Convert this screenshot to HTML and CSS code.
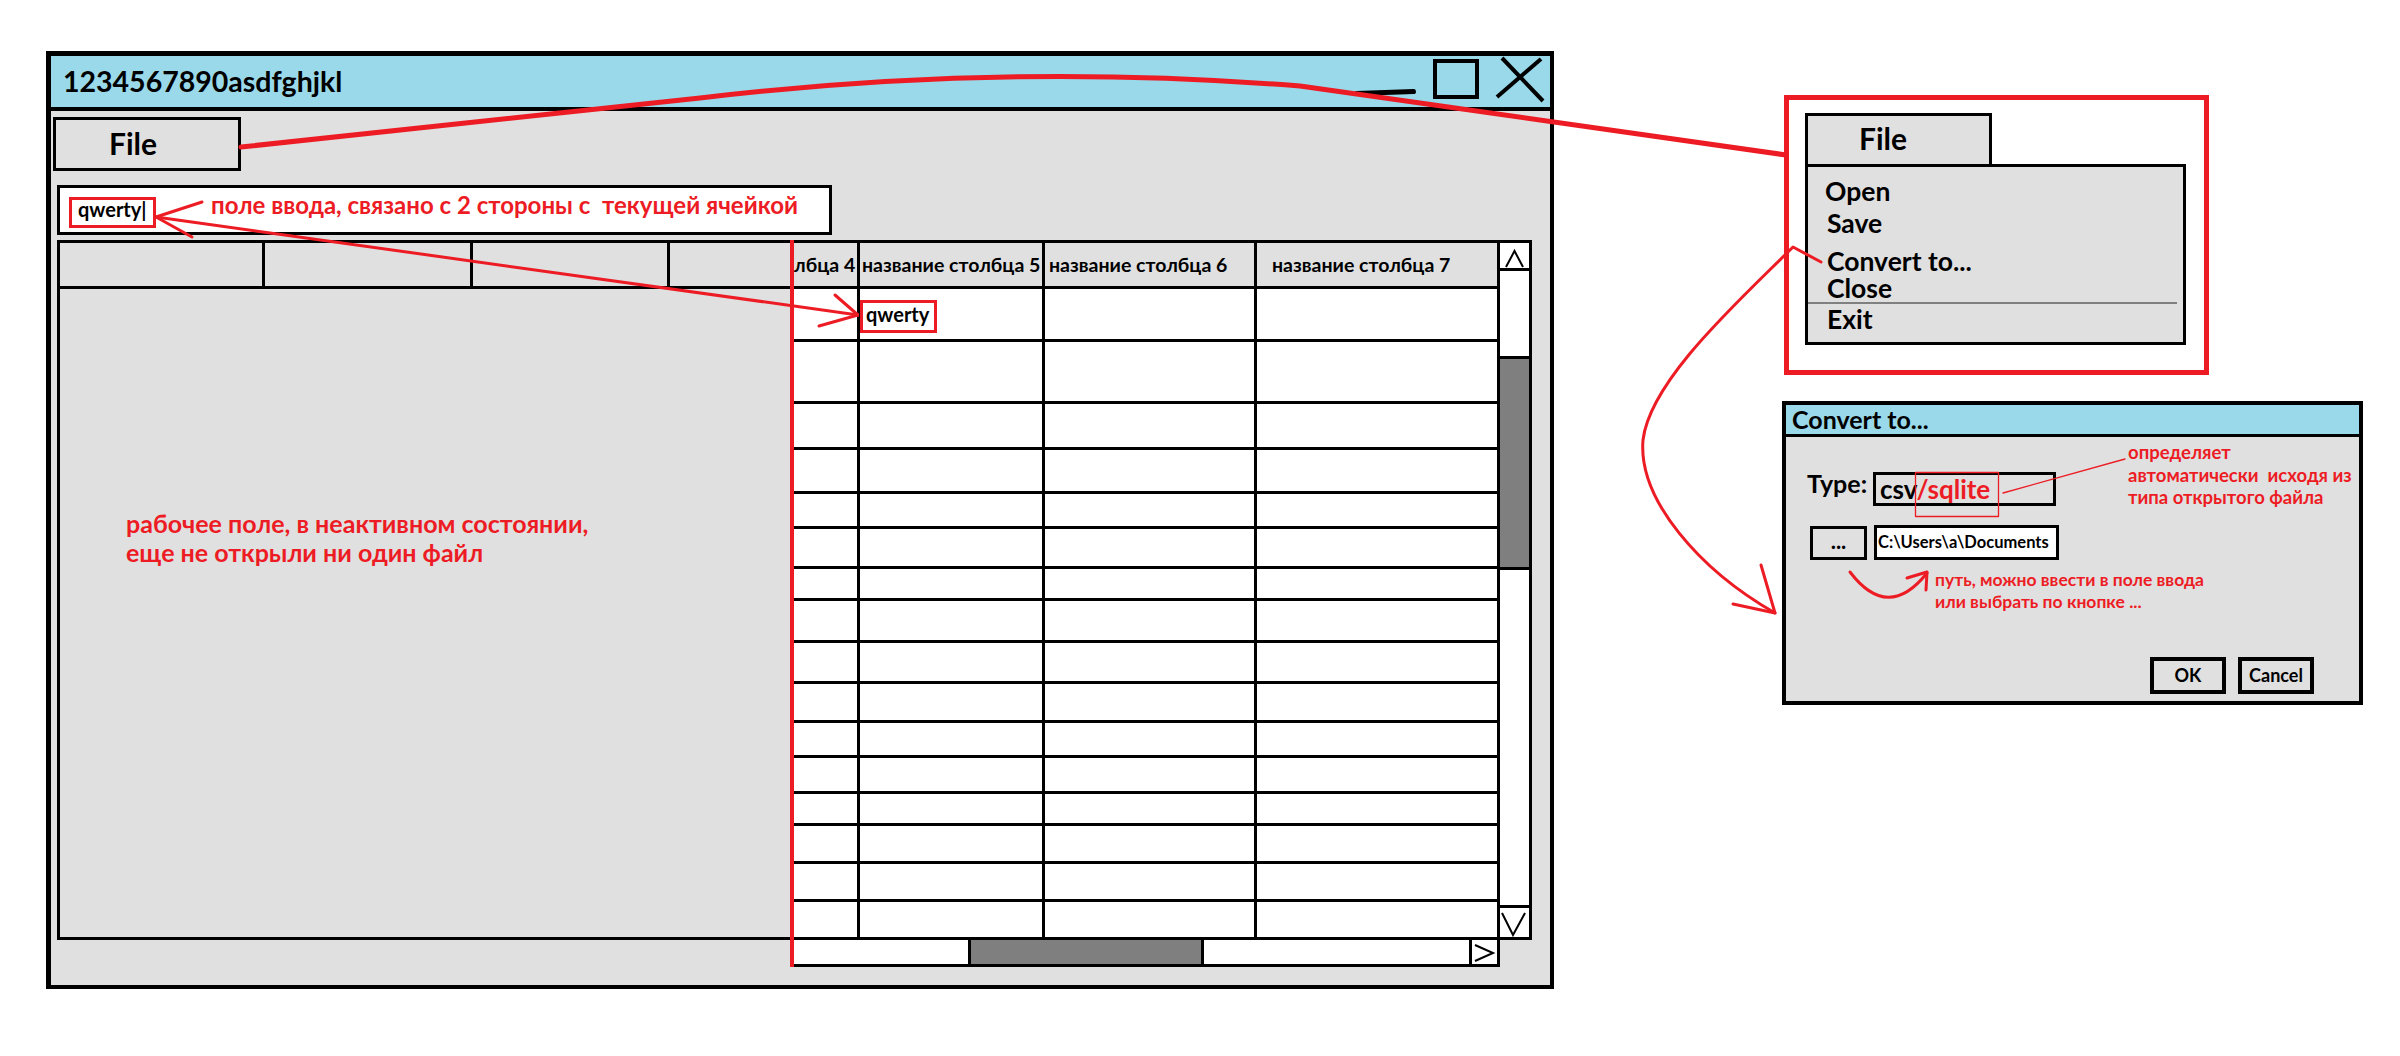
FILE: index.html
```html
<!DOCTYPE html>
<html lang="ru">
<head>
<meta charset="utf-8">
<title>Mockup</title>
<link rel="stylesheet" href="styles.css">
</head>
<body>
<div class="board">
  <div class="window">
    <div class="titlebar">
      <span class="title">1234567890asdfghjkl</span>
      <svg class="winctl" width="200" height="51" viewBox="0 0 200 51">
        <line x1="6.5" y1="37.5" x2="63.5" y2="35.5" stroke="#000" stroke-width="5" stroke-linecap="round"/>
        <rect x="85" y="5" width="42" height="36" fill="none" stroke="#000" stroke-width="4"/>
        <line x1="152" y1="2" x2="193" y2="45" stroke="#000" stroke-width="4"/>
        <line x1="191" y1="3" x2="147" y2="41" stroke="#000" stroke-width="4"/>
      </svg>
    </div>
    <div class="winbody">
      <div class="menubtn">File</div>
      <div class="inputbar">
        <div class="cellref">qwerty|</div>
        <span class="note note-input">поле ввода, связано с 2 стороны с&nbsp; текущей ячейкой</span>
      </div>
      <div class="tablearea">
        <div class="leftpane">
          <div class="lhead">
            <div class="lh lh1"></div>
            <div class="lh lh2"></div>
            <div class="lh lh3"></div>
            <div class="lh lh4"></div>
          </div>
          <div class="lbody">
            <p class="note note-work">рабочее поле, в неактивном состоянии,<br>еще не открыли ни один файл</p>
          </div>
        </div>
        <div class="redline"></div>
        <div class="grid">
          <div class="hc h4">лбца 4</div><div class="hc h5">название столбца 5</div><div class="hc h6">название столбца 6</div><div class="hc h7">название столбца 7</div>
          <div class="bc"></div><div class="bc sel"><div class="cellval">qwerty</div></div><div class="bc"></div><div class="bc"></div>
          <div class="bc"></div><div class="bc"></div><div class="bc"></div><div class="bc"></div>
          <div class="bc"></div><div class="bc"></div><div class="bc"></div><div class="bc"></div>
          <div class="bc"></div><div class="bc"></div><div class="bc"></div><div class="bc"></div>
          <div class="bc"></div><div class="bc"></div><div class="bc"></div><div class="bc"></div>
          <div class="bc"></div><div class="bc"></div><div class="bc"></div><div class="bc"></div>
          <div class="bc"></div><div class="bc"></div><div class="bc"></div><div class="bc"></div>
          <div class="bc"></div><div class="bc"></div><div class="bc"></div><div class="bc"></div>
          <div class="bc"></div><div class="bc"></div><div class="bc"></div><div class="bc"></div>
          <div class="bc"></div><div class="bc"></div><div class="bc"></div><div class="bc"></div>
          <div class="bc"></div><div class="bc"></div><div class="bc"></div><div class="bc"></div>
          <div class="bc"></div><div class="bc"></div><div class="bc"></div><div class="bc"></div>
          <div class="bc"></div><div class="bc"></div><div class="bc"></div><div class="bc"></div>
          <div class="bc"></div><div class="bc"></div><div class="bc"></div><div class="bc"></div>
          <div class="bc"></div><div class="bc"></div><div class="bc"></div><div class="bc"></div>
          <div class="bc"></div><div class="bc"></div><div class="bc"></div><div class="bc"></div>
        </div>
        <div class="vscroll">
          <div class="sb-up">
            <svg width="29" height="25" viewBox="0 0 29 25"><polyline points="6,24 14.5,8 23,24" fill="none" stroke="#000" stroke-width="2"/></svg>
          </div>
          <div class="sb-gap"></div>
          <div class="sb-thumb"></div>
          <div class="sb-fill"></div>
          <div class="sb-down">
            <svg width="29" height="29" viewBox="0 0 29 29"><polyline points="2,5 13,27 25,5" fill="none" stroke="#000" stroke-width="2"/></svg>
          </div>
        </div>
        <div class="hscroll">
          <div class="hs-left"></div>
          <div class="hs-thumb"></div>
          <div class="hs-fill"></div>
          <div class="hs-right">
            <svg width="25" height="24" viewBox="0 0 25 24"><polyline points="3,5 21,13 3,21" fill="none" stroke="#000" stroke-width="2"/></svg>
          </div>
        </div>
      </div>
    </div>
  </div>

  <div class="rightcol">
    <div class="menubox">
      <div class="mtab">File</div>
      <div class="mpanel">
        <div class="mi mi-open">Open</div>
        <div class="mi mi-save">Save</div>
        <div class="mi mi-conv">Convert to...</div>
        <div class="mi mi-close">Close</div>
        <div class="msep"></div>
        <div class="mi mi-exit">Exit</div>
      </div>
    </div>

    <div class="dialog">
      <div class="dtitle">Convert to...</div>
      <div class="dbody">
        <div class="drow1">
          <div class="dlabel">Type:</div>
          <div class="typebox">csv<span class="red">/sqlite</span></div>
          <div class="note dnote1">определяет<br>автоматически&nbsp; исходя из<br>типа открытого файла</div>
        </div>
        <div class="drow2">
          <div class="dotsbtn">...</div>
          <div class="pathinput">C:\Users\a\Documents</div>
        </div>
        <div class="note dnote2">путь, можно ввести в поле ввода<br>или выбрать по кнопке ...</div>
        <div class="dbtns">
          <div class="dbtn">OK</div>
          <div class="dbtn">Cancel</div>
        </div>
      </div>
    </div>
  </div>
</div>

<svg class="overlay" width="2400" height="1056" viewBox="0 0 2400 1056">
  <g fill="none" stroke="#ed1c24" stroke-linecap="round" stroke-linejoin="round">
    <path d="M241,147 L700,98 Q1000,62 1300,86 L1786,155" stroke-width="5"/>
    <path d="M156,217 L858,315" stroke-width="3"/>
    <path d="M202,202 L156,217 L192,237" stroke-width="3"/>
    <path d="M835,295 L858,315 L819,326" stroke-width="3"/>
    <path d="M1821,262 L1793,247 C1740,300 1650,380 1643,440 C1638,500 1700,570 1775,613" stroke-width="3"/>
    <path d="M1761,565 L1775,613 L1733,604" stroke-width="3"/>
    <rect x="1915.5" y="472.5" width="83" height="44" stroke-width="1.3"/>
    <path d="M2003,493 L2125,459" stroke-width="1.3"/>
    <path d="M1850,572 Q1888,622 1927,573" stroke-width="3"/>
    <path d="M1907,578 L1927,572 L1926,590" stroke-width="3"/>
  </g>
</svg>
</body>
</html>
```

FILE: styles.css
```css
* { box-sizing: border-box; margin: 0; padding: 0; }
html, body { background: #fff; }
body {
  font-family: "Lato", "Liberation Sans", sans-serif;
  font-weight: 700;
  color: #000;
  width: 2400px;
  height: 1056px;
  overflow: hidden;
  position: relative;
}
.red { color: #ed1c24; }
.note { color: #ed1c24; white-space: nowrap; }

.board { display: flex; align-items: flex-start; padding: 51px 0 0 46px; }

/* main window */
.window {
  width: 1508px; height: 938px;
  border-style: solid; border-color: #000; border-width: 5px 4px 4px 5px;
  background: #e0e0e0;
  display: flex; flex-direction: column;
  flex: none;
}
.titlebar {
  height: 55px; flex: none;
  background: #99d9ea;
  border-bottom: 4px solid #000;
  display: flex;
}
.title { font-size: 28.5px; line-height: 51px; padding-left: 12px; }
.winctl { margin-left: auto; display: block; }

.winbody { flex: 1; display: flex; flex-direction: column; align-items: flex-start; padding-left: 2px; }
.menubtn {
  margin-top: 6px; width: 188px; height: 54px;
  border: 3px solid #000;
  font-size: 30px; line-height: 47px; padding-left: 53px;
}
.inputbar {
  margin: 14px 0 0 4px; width: 775px; height: 50px;
  border: 3px solid #000; background: #fff;
  display: flex; align-items: flex-start;
}
.cellref {
  margin: 9px 0 0 9px; width: 87px; height: 31px;
  border: 3px solid #ed1c24;
  padding-left: 6px; font-size: 20px; line-height: 18px;
}
.note-input { margin: 4px 0 0 55px; font-size: 24px; line-height: 26px; }

/* table */
.tablearea {
  margin: 5px 0 0 4px;
  display: grid;
  grid-template-columns: 733px 4px 703px 35px;
  grid-template-rows: 700px 27px;
}
.leftpane {
  grid-area: 1 / 1 / 2 / 2;
  border-left: 3px solid #000; border-top: 3px solid #000; border-bottom: 3px solid #000;
  display: flex; flex-direction: column;
}
.lhead { display: flex; height: 46px; border-bottom: 3px solid #000; flex: none; }
.lh { border-right: 3px solid #000; }
.lh1 { width: 205px; }
.lh2 { width: 208px; }
.lh3 { width: 197px; }
.lh4 { flex: 1; border-right: 0; }
.lbody { flex: 1; padding: 220px 0 0 66px; }
.note-work { font-size: 25px; line-height: 29px; }

.redline { grid-area: 1 / 2 / 3 / 3; background: #ed1c24; }

.grid {
  grid-area: 1 / 3 / 2 / 4;
  border-top: 3px solid #000; border-bottom: 3px solid #000;
  background: #000;
  display: grid;
  grid-template-columns: 63px 182px 209px 240px;
  grid-template-rows: 43px 50px 59px 43px 41px 32px 37px 29px 39px 38px 36px 32px 33px 29px 35px 35px 35px;
  gap: 3px;
}
.hc { background: #e0e0e0; font-size: 19.5px; line-height: 43px; white-space: nowrap; overflow: hidden; }
.h4 { text-align: right; padding-right: 4px; }
.h5 { padding-left: 2px; }
.h6 { padding-left: 4px; }
.h7 { padding-left: 15px; }
.bc { background: #fff; }
.sel { position: relative; z-index: 1; box-shadow: 0 0 0 1px #000; }
.cellval {
  margin-top: 11px; width: 77px; height: 33px;
  border: 3px solid #ed1c24;
  padding: 1px 0 0 3px; font-size: 20px; line-height: 20px;
}

.vscroll {
  grid-area: 1 / 4 / 2 / 5;
  border: 3px solid #000; background: #fff;
  display: flex; flex-direction: column;
}
.vscroll svg, .hscroll svg { display: block; }
.sb-up { height: 28px; border-bottom: 3px solid #000; flex: none; }
.sb-gap { height: 85px; flex: none; }
.sb-thumb { height: 214px; flex: none; background: #7f7f7f; border-top: 3px solid #000; border-bottom: 3px solid #000; }
.sb-fill { flex: 1; }
.sb-down { height: 32px; border-top: 3px solid #000; flex: none; }

.hscroll {
  grid-area: 2 / 3 / 3 / 4;
  width: 706px;
  background: #fff;
  border-right: 3px solid #000; border-bottom: 3px solid #000;
  display: flex;
}
.hs-left { width: 174px; }
.hs-thumb { width: 236px; background: #7f7f7f; border-left: 3px solid #000; border-right: 3px solid #000; }
.hs-fill { flex: 1; }
.hs-right { width: 28px; border-left: 3px solid #000; }

/* right column */
.rightcol { margin-left: 230px; display: flex; flex-direction: column; align-items: flex-start; }
.menubox {
  margin-top: 44px; width: 425px; height: 280px;
  border: 5px solid #ed1c24; background: #fff;
  padding: 13px 0 0 16px;
}
.mtab {
  width: 187px; height: 51px;
  border: 3px solid #000; border-bottom: 0;
  background: #e0e0e0;
  font-size: 30px; line-height: 44px; padding-left: 51px;
}
.mpanel {
  width: 381px; height: 181px;
  border: 3px solid #000; background: #e0e0e0;
  padding-top: 11px;
}
.mi { font-size: 26.5px; line-height: 26px; padding-left: 19px; }
.mi-open { height: 32px; padding-left: 17px; }
.mi-save { height: 38px; }
.mi-conv { height: 27px; }
.mi-close { height: 27px; }
.msep { height: 2px; background: #808080; margin: 0 6px 2px 0; }
.mi-exit { height: 26px; }

.dialog {
  margin: 26px 0 0 -2px; width: 581px; height: 304px;
  border: 4px solid #000; background: #e0e0e0;
  display: flex; flex-direction: column;
}
.dtitle {
  height: 32px; flex: none;
  background: #99d9ea; border-bottom: 3px solid #000;
  font-size: 25px; line-height: 29px; padding-left: 6px;
}
.dbody { flex: 1; display: flex; flex-direction: column; align-items: flex-start; }
.drow1 { display: flex; align-items: flex-start; margin-top: 4px; }
.dlabel { margin: 27px 0 0 21px; width: 66px; font-size: 25px; line-height: 30px; }
.typebox {
  margin-top: 31px; width: 183px; height: 34px;
  border: 3px solid #000;
  font-size: 26px; line-height: 28px; padding-left: 4px; white-space: nowrap;
}
.dnote1 { margin-left: 72px; font-size: 18.5px; line-height: 22.5px; }
.drow2 { display: flex; align-items: flex-start; margin-top: 16px; }
.dotsbtn {
  margin: 1px 0 0 24px; width: 57px; height: 34px;
  border: 3px solid #000;
  text-align: center; font-size: 22px; line-height: 24px;
}
.pathinput {
  margin-left: 7px; width: 185px; height: 35px;
  border: 3px solid #000; background: #fff;
  font-size: 16.5px; line-height: 29px; padding-left: 1px;
  white-space: nowrap; overflow: hidden;
}
.dnote2 { margin: 9px 0 0 149px; font-size: 17.5px; line-height: 22px; }
.dbtns { align-self: flex-end; display: flex; align-items: flex-end; gap: 12px; margin: 44px 45px 0 0; }
.dbtn {
  width: 76px; height: 37px;
  border: 4px solid #000;
  text-align: center; font-size: 18px; line-height: 29px;
}

.overlay { position: absolute; left: 0; top: 0; pointer-events: none; }
```
